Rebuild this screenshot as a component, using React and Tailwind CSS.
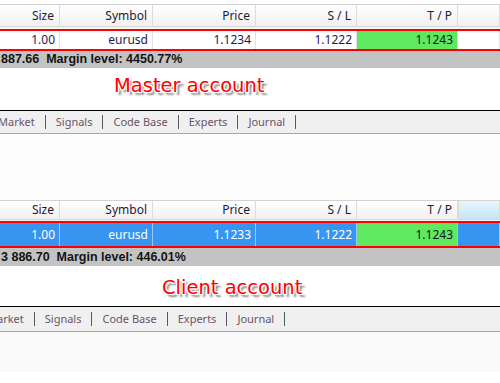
import React from "react";

const COLS = "grid grid-cols-[60px_93px_103px_101px_101px_1fr]";
const LABELS = ["Size", "Symbol", "Price", "S / L", "T / P", ""];

function Header({ hover, h }) {
  return (
    <div
      className={`${COLS} ${h} bg-linear-to-b from-white to-[#f0f0f0] border-b border-[#d9d9d9] text-[#1e1a36] text-[12px]`}
    >
      {LABELS.map((l, i) => (
        <div
          key={i}
          className={`flex items-center justify-end pr-[5px] border-r border-[#dcdcdc] ${
            i === 5 && hover ? "bg-linear-to-b from-[#e9f6fd] to-[#c3e5f6] border-l border-[#9fd0ec]" : ""
          }`}
        >
          {l}
        </div>
      ))}
    </div>
  );
}

function DataRow({ values, selected, h }) {
  return (
    <div
      className={`${COLS} ${h} text-[12px] ${
        selected ? "bg-[#3795f2] text-white" : "bg-white text-[#1e1a4e]"
      }`}
    >
      {values.map((v, i) => {
        const green = i === 4;
        return (
          <div
            key={i}
            className={`flex items-center justify-end pr-[4px] border-r ${
              selected ? "border-[#9cc8f5]" : "border-[#e3e3e3]"
            } ${green ? "bg-[#5fe95f] text-[#101820]" : ""}`}
          >
            {v}
          </div>
        );
      })}
    </div>
  );
}

function RedLine() {
  return <div className="h-[2px] bg-[#ff0000]" />;
}

function Status({ text, h }) {
  return (
    <div
      className={`${h} bg-[#c3c3c3] flex items-center pl-[1px] font-bold text-[12.5px] text-[#141414] whitespace-pre font-['Liberation_Sans',sans-serif]`}
    >
      {text}
    </div>
  );
}

function Label({ text, pad, h }) {
  return (
    <div className={`${h} bg-white flex items-center ${pad}`}>
      <span className="font-['DejaVu_Sans',sans-serif] text-[19.5px] text-[#ff0000] [text-shadow:-1px_-1px_0_#fff,1px_-1px_0_#fff,-1px_1px_0_#fff,1px_1px_0_#fff,0_-1px_0_#fff,0_1px_0_#fff,-1px_0_0_#fff,1px_0_0_#fff,3px_3px_2px_#7a7a7a]">
        {text}
      </span>
    </div>
  );
}

function Tabs({ first, h }) {
  const items = [first, "Signals", "Code Base", "Experts", "Journal"];
  return (
    <div className={`${h} bg-[#f0f0f0] border-t border-black flex items-center text-[11px] text-[#6c5466] whitespace-nowrap`}>
      {items.map((t, i) => (
        <React.Fragment key={i}>
          <span>{t}</span>
          <span className="mx-[10px] w-px h-[14px] bg-[#5a5a5a]" />
        </React.Fragment>
      ))}
    </div>
  );
}

export default function App() {
  return (
    <div className="w-[500px] h-[383px] overflow-hidden bg-white font-['Noto_Sans',sans-serif] flex flex-col">
      {/* Master */}
      <div className="h-[4px] bg-white" />
      <div className="h-px bg-[#d2d2d2]" />
      <Header h="h-[22px]" />
      <div className="h-[2px] bg-[#f3f3f3]" />
      <RedLine />
      <DataRow h="h-[18px]" values={["1.00", "eurusd", "1.1234", "1.1222", "1.1243", ""]} />
      <RedLine />
      <Status h="h-[17px]" text="887.66  Margin level: 4450.77%" />
      <Label h="h-[42px]" pad="pl-[114px] pb-[6px]" text="Master account" />
      <Tabs h="h-[23px]" first={<span className="ml-[-2px]">Market</span>} />
      <div className="h-px bg-[#a6a6a6]" />
      <div className="h-[66px] bg-[#fdfdfd]" />

      {/* Client */}
      <div className="h-px bg-[#d2d2d2]" />
      <Header h="h-[19px]" hover />
      <div className="h-px bg-[#f3f3f3]" />
      <RedLine />
      <DataRow h="h-[23px]" selected values={["1.00", "eurusd", "1.1233", "1.1222", "1.1243", ""]} />
      <RedLine />
      <Status h="h-[18px]" text="3 886.70  Margin level: 446.01%" />
      <Label h="h-[40px]" pad="pl-[162px] pt-[4px]" text="Client account" />
      <Tabs h="h-[25px]" first={<span className="ml-[-13px]">Market</span>} />
      <div className="h-px bg-[#a6a6a6]" />
      <div className="h-[40px] bg-[#fafafa]" />
      <div className="flex-1 bg-white" />
    </div>
  );
}
